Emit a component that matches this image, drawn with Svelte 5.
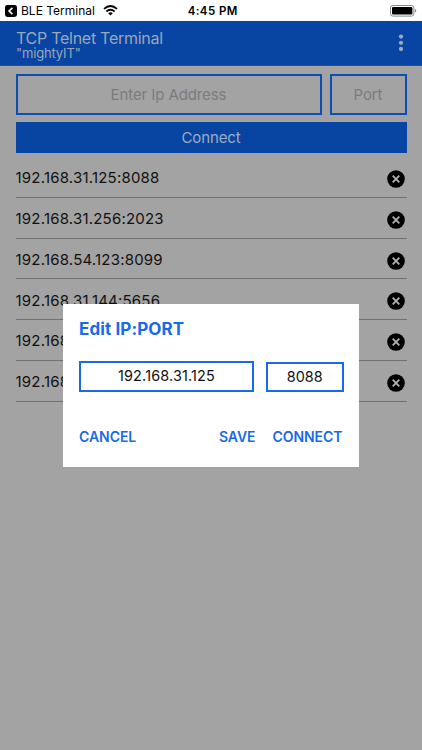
<script>
  const hosts = [
    '192.168.31.125:8088',
    '192.168.31.256:2023',
    '192.168.54.123:8099',
    '192.168.31.144:5656',
    '192.168.31.125:8088',
    '192.168.31.125:8088'
  ];
</script>

<div class="screen">
  <div class="status">
    <div class="back">
      <svg width="12" height="12" viewBox="0 0 12 12"><rect width="12" height="12" rx="2.4" fill="#000" /><path d="M7.4 2.9 4.1 6l3.3 3.1" fill="none" stroke="#fff" stroke-width="1.6" /></svg>
      <span class="app">BLE Terminal</span>
      <svg class="wifi" width="15" height="11" viewBox="0 0 15 11"><g fill="none" stroke="#000" stroke-width="1.9"><path d="M1 3.9Q7.5-1.7 14 3.9" /><path d="M3.4 6.5Q7.5 3 11.6 6.5" /></g><path d="M7.5 10.4 5.2 8.2Q7.5 6.5 9.8 8.2Z" /></svg>
    </div>
    <span class="time">4:45 PM</span>
    <svg class="battery" width="27" height="12" viewBox="0 0 27 12"><rect x=".5" y=".5" width="23.4" height="10.6" rx="2.4" fill="#fff" stroke="#888" /><rect x="2" y="2" width="20.4" height="7.6" rx="1" /><path d="M25 4v3.6q1.3-.5 1.3-1.8T25 4" fill="#888" /></svg>
  </div>

  <header>
    <div>
      <div class="title">TCP Telnet Terminal</div>
      <div class="sub">"mightyIT"</div>
    </div>
    <svg width="6" height="18" viewBox="0 0 6 18" fill="#9ba7bb"><circle cx="3" cy="2.6" r="2.15" /><circle cx="3" cy="8.8" r="2.15" /><circle cx="3" cy="15" r="2.15" /></svg>
  </header>

  <main>
    <div class="fields">
      <div class="field ip"><span>Enter Ip Address</span></div>
      <div class="field port"><span>Port</span></div>
    </div>
    <div class="connect"><span>Connect</span></div>
    <div class="list">
      {#each hosts as host}
        <div class="row">
          <span>{host}</span>
          <svg width="18" height="18" viewBox="0 0 18 18"><circle cx="9" cy="9" r="8.8" /><path d="m5.7 5.7 6.6 6.6m0-6.6-6.6 6.6" stroke="#b0b0b0" stroke-width="1.8" /></svg>
        </div>
      {/each}
    </div>
  </main>

  <div class="dialog">
    <div class="heading">Edit IP:PORT</div>
    <div class="inputs">
      <div class="input address"><span>192.168.31.125</span></div>
      <div class="input number"><span>8088</span></div>
    </div>
    <div class="actions">
      <span class="cancel">CANCEL</span>
      <span class="save">SAVE</span>
      <span class="go">CONNECT</span>
    </div>
  </div>
</div>

<style>
  .screen {
    position: relative;
    width: 422px;
    height: 750px;
    overflow: hidden;
    background: #a3a3a3;
    font-family: Inter, "Liberation Sans", sans-serif;
    color: #111;
    white-space: nowrap;
  }
  svg { display: block; flex: none; }
  .status {
    height: 21px;
    box-sizing: border-box;
    background: #fff;
    display: grid;
    grid-template-columns: 1fr auto 1fr;
    align-items: center;
    padding: 0 5px 0 4.5px;
    color: #000;
  }
  .back { display: flex; align-items: center; }
  .app { font-size: 12px; margin-left: 4.5px; letter-spacing: 0; line-height: 20px; }
  .wifi { margin-left: 8px; }
  .time { font-size: 11.5px; font-weight: 600; letter-spacing: 0.42px; line-height: 20px; padding-left: 4px; }
  .battery { justify-self: end; }
  header {
    height: 44.5px;
    box-sizing: border-box;
    background: #0844a2;
    border-bottom: 1px solid #0c52bd;
    color: #9ba7bb;
    display: flex;
    justify-content: space-between;
    padding: 0 18px 0 16px;
    align-items: center;
  }
  .title { font-size: 16px; line-height: 17px; margin-top: 5px; letter-spacing: -0.27px; }
  .sub { font-size: 13px; line-height: 13px; letter-spacing: -0.15px; }
  main { padding: 8px 15.5px 0; }
  .fields { display: flex; gap: 8px; height: 41px; }
  .field {
    box-sizing: border-box;
    border: 2px solid #0b4eb5;
    display: flex;
    align-items: center;
    justify-content: center;
    color: #7b7b7f;
    font-size: 15px;
    letter-spacing: -0.1px;
  }
  .ip { flex: 1; }
  .port { width: 77px; }
  .connect {
    margin-top: 7px;
    height: 31.5px;
    background: #0844a2;
    color: #9eacc5;
    font-size: 15px;
    letter-spacing: -0.1px;
    display: flex;
    align-items: center;
    justify-content: center;
  }
  .list { padding-top: 4px; }
  .row {
    height: 40.75px;
    box-sizing: border-box;
    border-bottom: 1px solid #717171;
    display: flex;
    justify-content: space-between;
    align-items: center;
    font-size: 15px;
    letter-spacing: 0.2px;
    padding: 2px 1.5px 0 0;
  }
  .row svg { margin-top: 2.5px; }
  .dialog {
    position: absolute;
    left: 63px;
    top: 304px;
    width: 296px;
    height: 162.5px;
    box-sizing: border-box;
    padding: 13px 15.5px 0 16px;
    background: #fff;
    color: #196ae9;
  }
  .heading { font-size: 17px; font-weight: 700; line-height: 24px; letter-spacing: 0.1px; }
  .inputs { display: flex; justify-content: space-between; align-items: flex-end; height: 31px; margin-top: 20px; }
  .input {
    box-sizing: border-box;
    border: 2px solid #196ae9;
    color: #111;
    display: flex;
    align-items: center;
    justify-content: center;
    font-size: 14.4px;
  }
  .input span { margin-top: -2px; }
  .address { width: 175px; height: 31px; letter-spacing: 0.17px; }
  .number { width: 77.5px; height: 30px; }
  .actions { display: flex; margin-top: 35px; font-size: 14px; font-weight: 600; line-height: 20px; letter-spacing: -0.05px; }
  .save { margin-left: auto; }
  .go { margin-left: 17px; margin-right: 1px; }
</style>
